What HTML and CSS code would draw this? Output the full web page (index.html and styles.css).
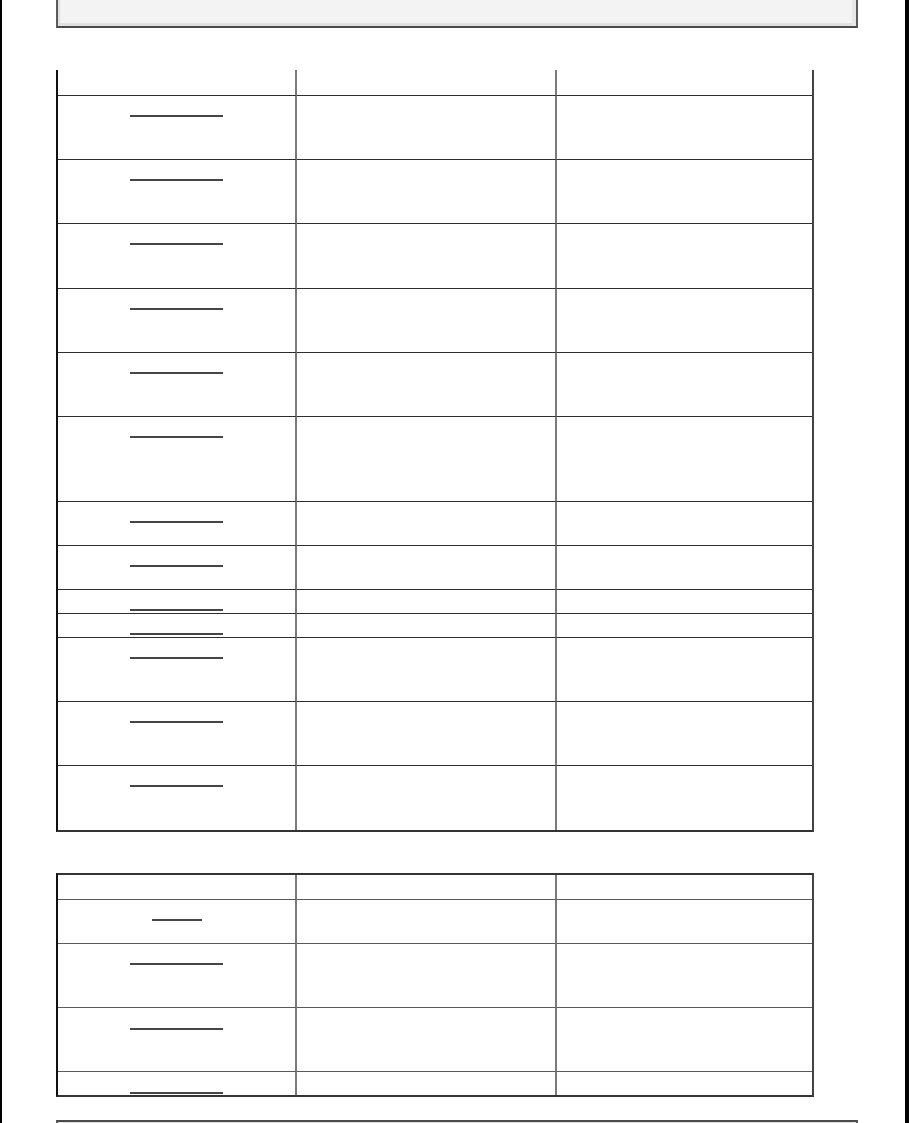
FILE: index.html
```html
<!DOCTYPE html>
<html lang="en">
<head>
<meta charset="utf-8">
<title>Table page</title>
<link rel="stylesheet" href="styles.css">
</head>
<body>
<div class="page">
  <div class="panel panel-top"></div>

  <table class="grid grid-first">
    <colgroup><col class="c1"><col class="c2"><col class="c3"></colgroup>
    <tr class="r-head"><td></td><td></td><td></td></tr>
    <tr class="r3"><td><div class="u"></div></td><td></td><td></td></tr>
    <tr class="r3"><td><div class="u"></div></td><td></td><td></td></tr>
    <tr class="r3b"><td><div class="u"></div></td><td></td><td></td></tr>
    <tr class="r3"><td><div class="u"></div></td><td></td><td></td></tr>
    <tr class="r3"><td><div class="u"></div></td><td></td><td></td></tr>
    <tr class="r4"><td><div class="u"></div></td><td></td><td></td></tr>
    <tr class="r2"><td><div class="u"></div></td><td></td><td></td></tr>
    <tr class="r2"><td><div class="u"></div></td><td></td><td></td></tr>
    <tr class="r1"><td><div class="u"></div></td><td></td><td></td></tr>
    <tr class="r1"><td><div class="u"></div></td><td></td><td></td></tr>
    <tr class="r3"><td><div class="u"></div></td><td></td><td></td></tr>
    <tr class="r3"><td><div class="u"></div></td><td></td><td></td></tr>
    <tr class="r3 last"><td><div class="u"></div></td><td></td><td></td></tr>
  </table>

  <table class="grid grid-second">
    <colgroup><col class="c1"><col class="c2"><col class="c3"></colgroup>
    <tr class="r-head2"><td></td><td></td><td></td></tr>
    <tr class="r2"><td><div class="u u-short"></div></td><td></td><td></td></tr>
    <tr class="r3"><td><div class="u"></div></td><td></td><td></td></tr>
    <tr class="r3"><td><div class="u u-low"></div></td><td></td><td></td></tr>
    <tr class="r-end last"><td><div class="u u-low"></div></td><td></td><td></td></tr>
  </table>

  <div class="panel panel-bottom"></div>
</div>
</body>
</html>
```

FILE: styles.css
```css
html, body {
  margin: 0;
  padding: 0;
  background: #ffffff;
  font-family: "Liberation Serif", "Times New Roman", serif;
}

.page {
  box-sizing: border-box;
  width: 909px;
  min-height: 1123px;
  border-left: 2px solid #000;
  border-right: 4px solid #000;
  padding-left: 54px;
  overflow: hidden;
}

.panel {
  box-sizing: border-box;
  width: 802px;
  background: #f3f3f3;
  border-left: 2px solid #5c5c5c;
  border-right: 2px solid #5c5c5c;
}

.panel-top {
  height: 28px;
  border-bottom: 2px solid #4a4a4a;
  box-shadow: inset 2px 0 0 #e0e0e0, inset -4px 0 0 #e8e8e8, inset 0 -3px 0 #e0e0e0;
}

.panel-bottom {
  height: 20px;
  margin-top: 23px;
  border-top: 2px solid #4a4a4a;
  box-shadow: inset 2px 0 0 #e0e0e0, inset -4px 0 0 #e8e8e8, inset 0 3px 0 #e0e0e0;
}

.grid {
  table-layout: fixed;
  border-collapse: separate;
  border-spacing: 0;
  width: 758px;
  border-left: 2px solid #111;
  border-right: 2px solid #444;
  border-bottom: 2px solid #333;
}

.grid-first {
  margin-top: 42px;
}

.grid-second {
  margin-top: 41px;
  border-top: 2px solid #333;
}

.c1 { width: 239px; }
.c2 { width: 260px; }
.c3 { width: 255px; }

.grid td {
  box-sizing: border-box;
  padding: 0;
  vertical-align: top;
  border-bottom: 1px solid #2e2e2e;
}

.grid-second td {
  border-bottom-color: #5a5a5a;
}

.grid td:nth-child(1),
.grid td:nth-child(2) {
  border-right: 2px solid #7a7a7a;
}

.grid tr.last td {
  border-bottom: 0;
}

.r-head td { height: 26px; }
.r-head2 td { height: 25px; }
.r1 td { height: 24px; }
.r2 td { height: 44px; }
.r3 td { height: 64px; }
.r3b td { height: 65px; }
.r4 td { height: 85px; }
.r-end td { height: 23px; }
.grid tr.last.r3 td { height: 64px; }

.u {
  box-sizing: border-box;
  width: 93px;
  height: 21px;
  margin: 0 auto;
  border-bottom: 2px solid #464646;
}

.u-short {
  width: 50px;
}

.u-low {
  height: 22px;
}
```
